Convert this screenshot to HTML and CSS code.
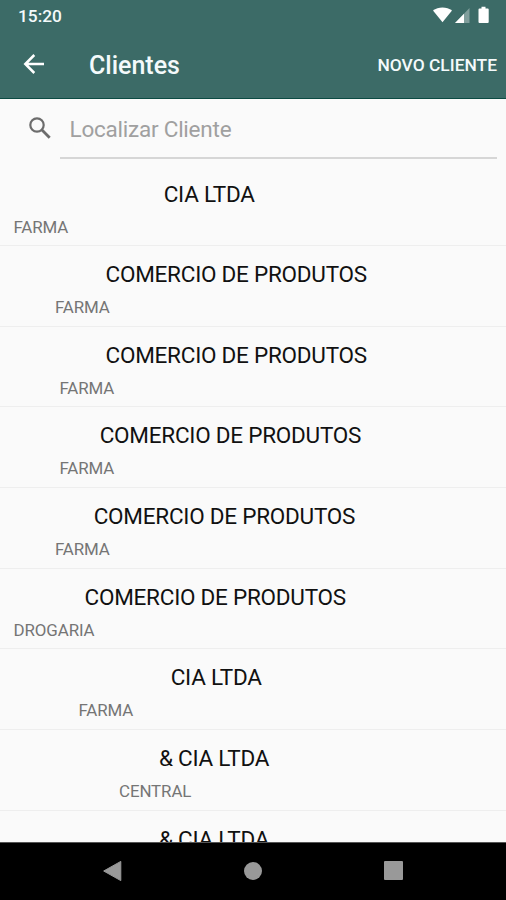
FILE: index.html
```
<!DOCTYPE html>
<html lang="pt-BR">
<head>
<meta charset="utf-8">
<title>Clientes</title>
<link rel="stylesheet" href="styles.css">
</head>
<body>
<div class="screen">
  <header class="top">
    <div class="status">
      <span class="clock">15:20</span>
      <svg class="status-icons" width="58" height="20" viewBox="0 0 58 20" fill="#fff">
        <path d="M0 4.600C5.300 .3 13.700 .3 19 4.600L9.500 16.300Z"/>
        <path d="M36.500 2V17H22Z" opacity=".35"/>
        <path d="M31 7.700V17H22Z"/>
        <path d="M48.500 .7h4v1.700h2.200q1 0 1 1v12.600q0 1 -1 1h-8.200q-1 0 -1-1V3.400q0-1 1-1h2z"/>
      </svg>
    </div>
    <div class="toolbar">
      <svg class="back" width="22" height="22" viewBox="0 0 22 22" fill="none" stroke="#fff" stroke-width="2.500"><path d="M21 11H3M11.300 2L2.300 11L11.300 20"/></svg>
      <h1 class="title">Clientes</h1>
      <span class="action">NOVO CLIENTE</span>
    </div>
  </header>
  <div class="search">
    <svg class="lens" width="22" height="22" viewBox="0 0 22 22" fill="none" stroke="#6c6c6c" stroke-width="2.200"><circle cx="8" cy="8" r="6.700"/><path d="M13 13L20.700 20.700" stroke-width="2.800"/></svg>
    <div class="field">Localizar Cliente</div>
  </div>
  <main class="list">
    <div class="row r1"><p class="name">CIA LTDA</p><p class="kind">FARMA</p></div>
    <div class="row r2"><p class="name">COMERCIO DE PRODUTOS</p><p class="kind">FARMA</p></div>
    <div class="row r3"><p class="name">COMERCIO DE PRODUTOS</p><p class="kind">FARMA</p></div>
    <div class="row r4"><p class="name">COMERCIO DE PRODUTOS</p><p class="kind">FARMA</p></div>
    <div class="row r5"><p class="name">COMERCIO DE PRODUTOS</p><p class="kind">FARMA</p></div>
    <div class="row r6"><p class="name">COMERCIO DE PRODUTOS</p><p class="kind">DROGARIA</p></div>
    <div class="row r7"><p class="name">CIA LTDA</p><p class="kind">FARMA</p></div>
    <div class="row r8"><p class="name">&amp; CIA LTDA</p><p class="kind">CENTRAL</p></div>
    <div class="row r9"><p class="name">&amp; CIA LTDA</p></div>
  </main>
  <nav class="nav">
    <svg width="20" height="22" viewBox="0 0 20 22" fill="#999"><path d="M1.700 11L18.800 1.400V20.600Z" stroke="#999" stroke-linejoin="round"/></svg>
    <span class="home"></span>
    <span class="recent"></span>
  </nav>
</div>
</body>
</html>
```
FILE: styles.css
```
* { box-sizing: border-box; }
body { margin: 0; font-family: Roboto, sans-serif; }
.screen { width: 506px; height: 900px; display: flex; flex-direction: column; background: #fafafa; overflow: hidden; }
.top { height: 98.500px; flex: none; background: #3c6b67; border-bottom: 1px solid #0c4b43; color: #f4fafb; }
.status { height: 32px; display: flex; justify-content: space-between; padding: 0 15px 0 18px; }
.clock { font-size: 17.300px; font-weight: 500; line-height: 32px; }
.status-icons { margin-top: 6px; }
.toolbar { height: 65px; display: flex; align-items: center; padding: 0 9px 0 23px; }
.back { flex: none; margin-top: -1px; }
.title { margin: 2px 0 0 44px; font-size: 25px; font-weight: 500; line-height: 30px; }
.action { margin-left: auto; font-size: 17.400px; font-weight: 500; line-height: 24px; }
.search { height: 67px; flex: none; display: flex; padding: 0 9px 0 29px; }
.lens { flex: none; margin: 18.500px 9px 0 0; }
.field { flex: 1; height: 60px; border-bottom: 2px solid #d6d6d6; padding-left: 9.500px; font-size: 22.500px; letter-spacing: -.23px; line-height: 60px; color: #a0a0a0; }
.list { flex: 1; min-height: 0; overflow: hidden; }
.row { height: 80.650px; border-bottom: 1px solid #eee; padding-top: 13px; }
.name, .kind { margin: 0; white-space: nowrap; }
.name { font-size: 22.500px; letter-spacing: -.24px; line-height: 30px; color: #111; }
.kind { margin-top: 6px; font-size: 16.900px; letter-spacing: -.1px; line-height: 24px; color: #757575; padding-left: 13.500px; }
.r1 .name { padding-left: 163.700px; }
.r2 .name, .r3 .name { padding-left: 105.500px; }
.r4 .name { padding-left: 99.700px; }
.r5 .name { padding-left: 93.700px; }
.r6 .name { padding-left: 84.500px; }
.r7 .name { padding-left: 170.700px; }
.r8 .name, .r9 .name { padding-left: 159px; }
.r2 .kind, .r5 .kind { padding-left: 55px; }
.r3 .kind, .r4 .kind { padding-left: 59.500px; }
.r7 .kind { padding-left: 78.500px; }
.r8 .kind { padding-left: 119px; }
.nav { height: 58px; flex: none; background: #000; border-top: 1px solid #555; display: flex; align-items: center; justify-content: space-between; padding: 0 103px 2px 102px; }
.home { width: 18px; height: 18px; border-radius: 50%; background: #999; }
.recent { width: 19px; height: 19px; border-radius: 1px; background: #999; }
```
